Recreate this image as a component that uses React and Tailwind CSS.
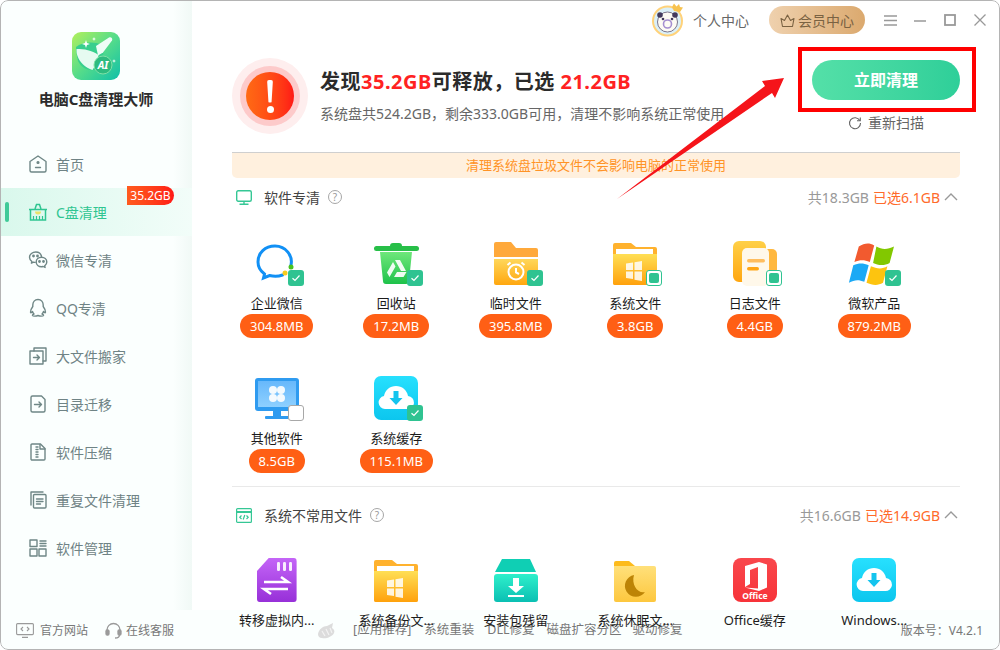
import { useId } from "react";

const FONT = "font-['Noto_Sans','Noto_Sans_CJK_SC',sans-serif]";

// ---------- 小图标 ----------
const NavSvg = ({ children }) => (
  <svg width="20" height="20" viewBox="0 0 20 20" fill="none" stroke="#6f8786" strokeWidth="1.4" strokeLinejoin="round" strokeLinecap="round">
    {children}
  </svg>
);

const HomeIcon = () => (
  <NavSvg>
    <path d="M2 7.500 10 2l8 5.500V16.500a1.500 1.500 0 0 1-1.500 1.500h-13A1.500 1.500 0 0 1 2 16.500Z" />
    <circle cx="10" cy="8.500" r=".9" fill="#6f8786" />
    <path d="M7.500 13.500h5" />
  </NavSvg>
);

const BasketIcon = () => (
  <svg width="20" height="20" viewBox="0 0 20 20" fill="none" stroke="#2fc591" strokeWidth="1.5">
    <path d="M1 7.500h18" />
    <path d="M2.500 7.500V18h15V7.500" />
    <path d="M7 7 8.500 2.500h3L13 7" />
    <path d="M7 7.500a3 3 0 0 0 6 0Z" fill="#e8e36a" stroke="none" transform="translate(0 2)" />
    <path d="M5.500 18v-4M8.500 18v-4M11.500 18v-4M14.500 18v-4" strokeWidth="1.200" />
  </svg>
);

const WechatIcon = () => (
  <NavSvg>
    <path d="M13.500 6.500C13 3.800 10.800 2 7.800 2 4.500 2 1.500 4.300 1.500 7.300c0 1.800 1 3.200 2.400 4.200l-.5 1.700 2.200-1c.5.100 1 .2 1.500.2" />
    <path d="M18.800 12c0-2.700-2.400-4.700-5.300-4.700S8.200 9.300 8.200 12s2.400 4.700 5.300 4.700c.6 0 1.100-.1 1.700-.2l1.900 1-.4-1.700c1.300-.9 2.100-2.200 2.100-3.800Z" />
    <circle cx="5.500" cy="6" r=".7" fill="#6f8786" />
    <circle cx="9.500" cy="6" r=".7" fill="#6f8786" />
    <circle cx="11.500" cy="11.500" r=".7" fill="#6f8786" />
    <circle cx="15.500" cy="11.500" r=".7" fill="#6f8786" />
  </NavSvg>
);

const QQIcon = () => (
  <NavSvg>
    <path d="M10 1.500c-3.300 0-5.200 2.500-5.200 5.500v1.500c-1.500 2-2.500 4-2.300 5.700.2 1 1 .6 2-.7.3 1 .8 1.800 1.500 2.500-1.200.4-1.700 1-1.500 1.500.4.800 3.500.8 5.500 0 2 .8 5.100.8 5.500 0 .2-.5-.3-1.100-1.500-1.500.7-.7 1.200-1.500 1.500-2.500 1 1.300 1.800 1.700 2 .7.200-1.700-.8-3.700-2.300-5.700V7c0-3-1.900-5.500-5.200-5.500Z" />
  </NavSvg>
);

const MoveIcon = () => (
  <NavSvg>
    <path d="M6 5V2h12v13h-3" />
    <rect x="2" y="5" width="13" height="13" />
    <path d="M5.500 11.500h6M9 9l2.500 2.500L9 14" />
  </NavSvg>
);

const DirIcon = () => (
  <NavSvg>
    <path d="M3 3.500A1.500 1.500 0 0 1 4.500 2h9L17 5.500v11a1.500 1.500 0 0 1-1.500 1.500h-11A1.500 1.500 0 0 1 3 16.500Z" />
    <path d="M6.500 10.500h7M11 8l2.500 2.500L11 13" />
  </NavSvg>
);

const ZipIcon = () => (
  <NavSvg>
    <path d="M3 3a1 1 0 0 1 1-1h8.500L17 6.500V17a1 1 0 0 1-1 1H4a1 1 0 0 1-1-1Z" />
    <path d="M12 2.500V7h5M8 5h2M8 7.500h2M8 10h2M8 12.500h2M8 15h2" />
  </NavSvg>
);

const DupIcon = () => (
  <NavSvg>
    <path d="M3 15V2h12" />
    <rect x="5.500" y="4.500" width="12.500" height="13.500" rx="1" />
    <path d="M8.500 9h6.500M8.500 11.500h6.500M8.500 14h4" />
  </NavSvg>
);

const ManageIcon = () => (
  <NavSvg>
    <rect x="2" y="2" width="7" height="6.500" />
    <rect x="2" y="11" width="7" height="7" />
    <rect x="11" y="11" width="7" height="7" />
    <path d="M12 3h6M12 5.500h6M12 8h6" />
  </NavSvg>
);

const navItems = [
  { label: "首页", icon: HomeIcon },
  { label: "C盘清理", icon: BasketIcon, active: true, badge: "35.2GB" },
  { label: "微信专清", icon: WechatIcon },
  { label: "QQ专清", icon: QQIcon },
  { label: "大文件搬家", icon: MoveIcon },
  { label: "目录迁移", icon: DirIcon },
  { label: "软件压缩", icon: ZipIcon },
  { label: "重复文件清理", icon: DupIcon },
  { label: "软件管理", icon: ManageIcon },
];

const Logo = () => (
  <svg width="48" height="48" viewBox="0 0 48 48">
    <defs>
      <linearGradient id="logoBg" x1="0" y1="0" x2="1" y2="1">
        <stop offset="0" stopColor="#b3f05c" />
        <stop offset=".5" stopColor="#55dc8a" />
        <stop offset="1" stopColor="#0fbfa9" />
      </linearGradient>
    </defs>
    <rect width="48" height="48" rx="9" fill="url(#logoBg)" />
    <path d="M4 15C10 10 22 9 30 13c3 8 1 18-4 24-8 3-16 0-20-8-1-5-2-9-2-14Z" fill="#38cf8e" />
    <path d="M4.500 17c8 0 15 1 22 6-1 6-3 10-6 15-7-2-13-8-15-14-1-2-1-5-1-7Z" fill="#e6fbf1" />
    <path d="M24 14 37 5.500c2-1 4 1 3 3l-9 12-5 3Z" fill="#eefdf7" />
    <circle cx="31" cy="33" r="9" fill="#2dbb7f" stroke="#7fe0a6" strokeWidth="1" />
    <text x="31" y="37" textAnchor="middle" fontSize="10.500" fontWeight="700" fontStyle="italic" fill="#fff" fontFamily="Noto Sans">AI</text>
    <path d="M14 8l1 3 3 1-3 1-1 3-1-3-3-1 3-1ZM22 5l.6 1.400 1.400.6-1.400.6L22 9l-.6-1.400L20 7l1.400-.6ZM42 27l.5 1.500 1.500.5-1.500.5L42 31l-.5-1.500L40 29l1.500-.5Z" fill="#fff" />
  </svg>
);

// ---------- 文件类型图标 ----------
const Check = ({ state }) => {
  if (state === "none") {
    return <span className="absolute right-[-5px] bottom-[-1px] h-4 w-4 rounded-[3px] border border-[#a8a8a8] bg-white" />;
  }
  if (state === "part") {
    return (
      <span className="absolute right-[-5px] bottom-[-1px] flex h-4 w-4 items-center justify-center rounded-[3px] border border-[#2fc391] bg-white">
        <span className="h-[10px] w-[10px] rounded-[2px] bg-[#2fc391]" />
      </span>
    );
  }
  return (
    <span className="absolute right-[-5px] bottom-[-1px] flex h-4 w-4 items-center justify-center rounded-[3px] bg-[#2fc391]">
      <svg width="10" height="10" viewBox="0 0 10 10" fill="none" stroke="#fff" strokeWidth="1.200">
        <path d="M1.500 5.200 4 7.500 8.500 2.500" />
      </svg>
    </span>
  );
};

const Grad = ({ id, from, to }) => (
  <linearGradient id={id} x1="0" y1="0" x2="0" y2="1">
    <stop offset="0" stopColor={from} />
    <stop offset="1" stopColor={to} />
  </linearGradient>
);

const FileIcon = ({ children }) => (
  <svg width="44" height="44" viewBox="0 0 44 44" className="overflow-visible">
    {children}
  </svg>
);

const WeComIcon = () => (
  <FileIcon>
    <path d="M36 24c2-9-5-19-16-19C10 5 3 12 3 21c0 5 2.500 9 6.500 12l-1 4 6-2.500c4 1 9 1 13-.5" fill="none" stroke="#1190f5" strokeWidth="3" strokeLinecap="round" />
    <circle cx="36" cy="26" r="2.500" fill="#48c31f" />
    <circle cx="30" cy="32" r="2.500" fill="#f8cc1c" />
  </FileIcon>
);

const TrashIcon = () => {
  const id = useId();
  return (
    <FileIcon>
      <defs>
        <Grad id={id} from="#6fe77a" to="#1ec24a" />
      </defs>
      <rect x="0" y="5" width="45" height="5" rx="2.500" fill="#27bf48" />
      <path d="M16 5a3 3 0 0 1 3-3h6a3 3 0 0 1 3 3Z" fill="#27bf48" />
      <path d="M6 11h32l-3 29a3 3 0 0 1-3 3H12a3 3 0 0 1-3-3Z" fill={`url(#${id})`} />
      <path d="M21 19h5l6 11h-5ZM19 21l2.500 4.500-6 10.500-2.500-4.500ZM23 31h9.500l-3 5H20Z" fill="#fff" opacity=".92" />
    </FileIcon>
  );
};

const TempIcon = () => {
  const id = useId();
  return (
    <FileIcon>
      <defs>
        <Grad id={id} from="#ffd75a" to="#ffa70f" />
      </defs>
      <path d="M0 3a2 2 0 0 1 2-2h15l5 6h20a2 2 0 0 1 2 2v7H0Z" fill="#ffa93b" />
      <path d="M0 18h44v24a2 2 0 0 1-2 2H2a2 2 0 0 1-2-2Z" fill={`url(#${id})`} />
      <circle cx="22" cy="31" r="7.500" fill="none" stroke="#fff" strokeWidth="2" />
      <path d="M22 27v4.500l3 1.500M13.500 24l3-2.500M30.500 24l-3-2.500" fill="none" stroke="#fff" strokeWidth="2" />
    </FileIcon>
  );
};

const WinPanes = ({ x, y, s = 1 }) => (
  <path transform={`translate(${x} ${y}) scale(${s})`} d="M0 2.500 7 1.500v7.500H0ZM8.500 1.300 16 0v9H8.500ZM0 10.500h7V18l-7-1ZM8.500 10.500H16V20l-7.500-1.300Z" fill="#fff" opacity=".85" />
);

const WinFolderIcon = () => {
  const id = useId();
  return (
    <FileIcon>
      <defs>
        <Grad id={id} from="#ffdf55" to="#ffa10c" />
      </defs>
      <path d="M0 4a2 2 0 0 1 2-2h16l5 4h19a2 2 0 0 1 2 2v34a2 2 0 0 1-2 2H2a2 2 0 0 1-2-2Z" fill="#ffb22e" />
      <rect x="3" y="8" width="37" height="8" fill="#fff" />
      <path d="M0 13h44v29a2 2 0 0 1-2 2H2a2 2 0 0 1-2-2Z" fill={`url(#${id})`} />
      <WinPanes x="13" y="20" />
    </FileIcon>
  );
};

const LogIcon = () => {
  const id = useId();
  return (
    <FileIcon>
      <defs>
        <Grad id={id} from="#ffd047" to="#ffa610" />
      </defs>
      <rect x="0" y="0" width="33" height="41" rx="6" fill={`url(#${id})`} />
      <rect x="20" y="8" width="24" height="36" rx="5" fill="#ffb840" />
      <rect x="9" y="7" width="27" height="38" rx="5" fill="#fff8ea" />
      <rect x="14" y="18" width="18" height="3.500" rx="1.700" fill="#ffbd5e" />
      <rect x="14" y="26" width="12" height="3.500" rx="1.700" fill="#ffa616" />
    </FileIcon>
  );
};

const WindowsIcon = () => (
  <FileIcon>
    <g transform="translate(-2 0) scale(1.100 1.100)">
      <path d="M8 5c5-3 9-4 14-1l-4 15c-5-2-9-2-14 0Z" fill="#f25a2f" />
      <path d="M24 5c5 3 10 3 16 0l-4 15c-5 3-11 2-15 0Z" fill="#82c800" />
      <path d="M3 22c5-2 9-2 14 0l-4 15c-5-2-9-2-14 1Z" fill="#1ba9f5" />
      <path d="M19 23c5 2 10 3 15 0l-4 15c-5 3-10 2-15 0Z" fill="#fdc40f" />
    </g>
  </FileIcon>
);

const MonitorIcon = () => {
  const id = useId();
  return (
    <FileIcon>
      <defs>
        <Grad id={id} from="#67b8fb" to="#8ed0ff" />
      </defs>
      <rect x="0" y="2" width="44" height="33" rx="3" fill="#2f9bf0" />
      <rect x="3" y="5" width="38" height="26" fill={`url(#${id})`} />
      <rect x="18" y="35" width="8" height="6" fill="#2f9bf0" />
      <rect x="10" y="40" width="24" height="3" rx="1" fill="#2f9bf0" />
      <g fill="#fff" opacity=".92">
        <circle cx="18" cy="14" r="4" />
        <circle cx="26" cy="14" r="4" />
        <circle cx="18" cy="22" r="4" />
        <circle cx="26" cy="22" r="4" />
      </g>
    </FileIcon>
  );
};

const CloudIcon = () => {
  const id = useId();
  return (
    <FileIcon>
      <defs>
        <Grad id={id} from="#27e0fe" to="#0cc6ee" />
      </defs>
      <rect width="44" height="44" rx="7" fill={`url(#${id})`} />
      <path d="M11 33a6.500 6.500 0 0 1-1-12.900C11 14 16 10 22 10c6 0 11 4 12 10a6.500 6.500 0 0 1-1 13Z" fill="#fff" />
      <path d="M19.500 15h5v7h4L22 29l-6.500-7h4Z" fill="#14c4ee" />
    </FileIcon>
  );
};

const VirtualIcon = () => {
  const id = useId();
  return (
    <FileIcon>
      <defs>
        <Grad id={id} from="#c465f7" to="#9730d8" />
      </defs>
      <path d="M13 0h28a3 3 0 0 1 3 3v38a3 3 0 0 1-3 3H3a3 3 0 0 1-3-3V13Z" transform="translate(2 0) scale(.9 1)" fill={`url(#${id})`} />
      <g fill="#fff" opacity=".9">
        <rect x="22" y="4" width="3" height="9" rx="1.200" />
        <rect x="28" y="4" width="3" height="9" rx="1.200" />
        <rect x="34" y="4" width="3" height="9" rx="1.200" />
      </g>
      <path d="M9 24h24l-7-5M33 31H9l7 5" fill="none" stroke="#fff" strokeWidth="2.600" />
    </FileIcon>
  );
};

const InstallIcon = () => {
  const id = useId();
  return (
    <FileIcon>
      <defs>
        <Grad id={id} from="#2ff0cb" to="#0abfb3" />
      </defs>
      <path d="M8 1h28l6 13H1Z" fill="#0fcfb4" />
      <rect x="0" y="16" width="44" height="28" rx="3" fill={`url(#${id})`} />
      <path d="M19 20h6v8h5l-8 7-8-7h5Z" fill="#fff" />
      <rect x="14" y="37" width="16" height="2" fill="#fff" />
    </FileIcon>
  );
};

const SleepIcon = () => {
  const id = useId();
  return (
    <FileIcon>
      <defs>
        <Grad id={id} from="#ffe07a" to="#fdc73e" />
      </defs>
      <path d="M1 5a2 2 0 0 1 2-2h13l6 5h-21Z" fill="#fdbb1c" />
      <path d="M1 8h40a2 2 0 0 1 2 2v32a2 2 0 0 1-2 2H3a2 2 0 0 1-2-2Z" fill={`url(#${id})`} />
      <path d="M21 17a11 11 0 1 0 11 17c-7 2-14-7-11-17Z" fill="#bd8406" />
    </FileIcon>
  );
};

const OfficeIcon = () => {
  const id = useId();
  return (
    <FileIcon>
      <defs>
        <Grad id={id} from="#f9474c" to="#f73339" />
      </defs>
      <rect width="44" height="44" rx="8" fill={`url(#${id})`} />
      <path d="M12 8 26 4l8 2.500v23L26 33l-14-3.500 13 1V9L17 12v14l-5 3Z" fill="#fff" />
      <text x="22" y="41" textAnchor="middle" fontSize="8.500" fontWeight="700" fill="#fff" fontFamily="Noto Sans">Office</text>
    </FileIcon>
  );
};

const softwareFiles = [
  { name: "企业微信", size: "304.8MB", icon: WeComIcon, state: "on" },
  { name: "回收站", size: "17.2MB", icon: TrashIcon, state: "on" },
  { name: "临时文件", size: "395.8MB", icon: TempIcon, state: "on" },
  { name: "系统文件", size: "3.8GB", icon: WinFolderIcon, state: "part" },
  { name: "日志文件", size: "4.4GB", icon: LogIcon, state: "part" },
  { name: "微软产品", size: "879.2MB", icon: WindowsIcon, state: "on" },
  { name: "其他软件", size: "8.5GB", icon: MonitorIcon, state: "none" },
  { name: "系统缓存", size: "115.1MB", icon: CloudIcon, state: "on" },
];

const rareFiles = [
  { name: "转移虚拟内...", icon: VirtualIcon },
  { name: "系统备份文...", icon: WinFolderIcon },
  { name: "安装包残留", icon: InstallIcon },
  { name: "系统休眠文...", icon: SleepIcon },
  { name: "Office缓存", icon: OfficeIcon },
  { name: "Windows...", icon: CloudIcon },
];

const FileItem = ({ file }) => {
  const Icon = file.icon;
  return (
    <div className="flex flex-col items-center">
      <div className="relative h-11 w-11">
        <Icon />
        {file.state && <Check state={file.state} />}
      </div>
      <div className="mt-[8px] h-5 text-[13px] leading-5 whitespace-nowrap text-[#1c1c1c]">{file.name}</div>
      {file.size && (
        <div className="mt-[1px] flex h-6 items-center rounded-full bg-[#ff5f15] px-[10px] text-[13px] leading-6 text-white">
          {file.size}
        </div>
      )}
    </div>
  );
};

const HelpIcon = () => (
  <span className="ml-2 flex h-[14px] w-[14px] items-center justify-center rounded-full border border-[#a6a6a6] text-[10px] leading-none text-[#999]">?</span>
);

const Chevron = () => (
  <svg width="14" height="8" viewBox="0 0 14 8" fill="none" stroke="#999" strokeWidth="1.400" className="ml-[4px]">
    <path d="M1 7 7 1l6 6" />
  </svg>
);

const SectionHeader = ({ icon, title, total, picked, className }) => (
  <div className={`flex items-center pr-[2px] text-[14px] ${className}`}>
    <span className="ml-1 flex h-4 w-4 items-center justify-center">{icon}</span>
    <span className="ml-3 text-[#444]">{title}</span>
    <HelpIcon />
    <span className="ml-auto text-[#999]">{total}</span>
    <span className="ml-[4px] text-[#ff6a2b]">{picked}</span>
    <Chevron />
  </div>
);

const Sidebar = () => (
  <aside className="flex h-[610px] w-[192px] shrink-0 flex-col bg-gradient-to-r from-[#fbfffe] from-90% to-[#f1f9f6]">
    <div className="mt-[32px] flex justify-center">
      <Logo />
    </div>
    <div className="mt-[9px] text-center text-[15px] leading-5 font-bold text-[#2c2c2c]">电脑C盘清理大师</div>
    <nav className="mt-[31px] flex flex-col">
      {navItems.map((item) => {
        const Icon = item.icon;
        return (
          <div
            key={item.label}
            className={`relative flex h-12 items-center pl-[28px] text-[14px] ${
              item.active ? "bg-gradient-to-r from-[#d9f8ec] to-[#f2fdf9] text-[#2fc591]" : "text-[#6f8385]"
            }`}
          >
            {item.active && <span className="absolute top-[14px] left-[5px] h-[20px] w-[4px] rounded-full bg-[#3fca98]" />}
            <Icon />
            <span className="ml-[8px]">{item.label}</span>
            {item.badge && (
              <span className="absolute top-[-2px] left-[127px] flex h-[19px] w-[47px] items-center justify-center rounded-tl-lg rounded-r-full bg-gradient-to-r from-[#ff5a1e] to-[#ff1717] text-[12px] leading-none text-white">
                {item.badge}
              </span>
            )}
          </div>
        );
      })}
    </nav>
  </aside>
);

const TopBar = () => (
  <div className="flex h-10 items-center justify-end pr-[14px] text-[14px] text-[#666]">
    <svg width="34" height="34" viewBox="0 0 34 34" className="shrink-0">
      <circle cx="16.500" cy="18" r="15.500" fill="#ffd27a" />
      <circle cx="16.500" cy="18" r="13.500" fill="#dbf0f7" />
      <circle cx="16.500" cy="19" r="10" fill="#fdfbf4" stroke="#5f5470" strokeWidth=".8" />
      <circle cx="9" cy="12" r="2.800" fill="#433a5c" />
      <circle cx="24" cy="12" r="2.800" fill="#433a5c" />
      <circle cx="16.500" cy="21" r="4" fill="none" stroke="#a58fd0" strokeWidth="1.600" />
      <circle cx="12" cy="16" r="1.300" fill="#433a5c" />
      <circle cx="21" cy="16" r="1.300" fill="#433a5c" />
      <path d="M21 4 23 .5l2.500 3L28 1l1 3 3 .5-3 4.500-6-1Z" fill="#f7c24f" />
    </svg>
    <span className="ml-[8px]">个人中心</span>
    <div className="ml-[20px] flex h-7 w-24 items-center justify-center rounded-full bg-gradient-to-r from-[#efd1ae] to-[#dba96e] text-[#7a6242]">
      <svg width="15" height="15" viewBox="0 0 15 15" fill="none" stroke="#7a6242" strokeWidth="1.100" strokeLinejoin="round">
        <path d="M1 5.500 4.500 7.500 7.500 2l3 5.500 3.500-2-1.500 8h-10Z" />
      </svg>
      <span className="ml-[3px]">会员中心</span>
    </div>
    <div className="ml-[19px] flex items-center">
      <svg width="13" height="13" viewBox="0 0 13 13" stroke="#999" strokeWidth="1.500"><path d="M0 2h13M0 6.500h13M0 11h13" /></svg>
      <svg width="12" height="13" viewBox="0 0 12 13" stroke="#999" strokeWidth="1.500" className="ml-[17px]"><path d="M0 7h12" /></svg>
      <svg width="12" height="12" viewBox="0 0 12 12" fill="none" stroke="#999" strokeWidth="1.800" className="ml-[18px]"><rect x="1" y="1" width="10" height="10" /></svg>
      <svg width="12" height="12" viewBox="0 0 12 12" stroke="#999" strokeWidth="1.300" className="ml-[18px]"><path d="m.5.500 11 11M11.500.500l-11 11" /></svg>
    </div>
  </div>
);

const Hero = () => (
  <div className="flex h-[112px] pr-[40px] pl-[40px]">
    <div className="mt-[18px] flex h-[76px] w-[76px] shrink-0 items-center justify-center rounded-full bg-[#feeeee]">
      <div className="flex h-[60px] w-[60px] items-center justify-center rounded-full bg-[#fdcaca]">
        <div className="flex h-12 w-12 flex-col items-center justify-center rounded-full bg-gradient-to-r from-[#ff6a14] to-[#ff1616]">
          <span className="h-[23px] w-[6px] rounded-b-[3px] rounded-t-[2px] [clip-path:polygon(0_0,100%_0,75%_100%,25%_100%)] bg-white" />
          <span className="mt-[3px] h-[7px] w-[7px] rounded-full bg-white" />
        </div>
      </div>
    </div>
    <div className="ml-[12px] min-w-0">
      <div className="mt-[30px] text-[20px] leading-6 font-bold tracking-[0.5px] whitespace-nowrap text-[#2b2b2b]">
        发现<span className="text-[#ff2222]">35.2GB</span>可释放，已选 <span className="text-[#ff2222]">21.2GB</span>
      </div>
      <div className="mt-[10px] text-[14px] leading-5 whitespace-nowrap text-[#666]">
        系统盘共524.2GB，剩余333.0GB可用，清理不影响系统正常使用
      </div>
    </div>
    <div className="ml-auto flex w-[148px] shrink-0 flex-col items-center">
      <div className="mt-[20px] flex h-10 w-[148px] items-center justify-center rounded-full bg-gradient-to-r from-[#54e0a8] to-[#2ecf99] text-[16px] font-bold text-white">
        立即清理
      </div>
      <div className="mt-[13px] flex items-center text-[14px] leading-5 text-[#666]">
        <svg width="14" height="14" viewBox="0 0 14 14" fill="none" stroke="#666" strokeWidth="1.100">
          <path d="M11.800 4.500A5.500 5.500 0 1 0 12.500 7" />
          <path d="M12.300 1.500v3.300H9" />
        </svg>
        <span className="ml-[6px]">重新扫描</span>
      </div>
    </div>
  </div>
);

const MainContent = () => (
  <main className="relative z-10 flex h-[650px] min-w-0 flex-1 flex-col overflow-hidden">
    <TopBar />
    <Hero />
    <div className="mr-[40px] ml-[40px] flex h-[26px] items-center justify-center rounded-b-[5px] border-t border-[#cfcfcf] bg-[#fff0de] text-[13px] text-[#ff9326]">
      清理系统盘垃圾文件不会影响电脑的正常使用
    </div>
    <div className="mr-[40px] ml-[40px] flex-1">
      <SectionHeader
        className="h-10 pb-[2px]"
        title="软件专清"
        total="共18.3GB"
        picked="已选6.1GB"
        icon={
          <svg width="16" height="15" viewBox="0 0 16 15" fill="none" stroke="#35c795" strokeWidth="1.400">
            <rect x=".7" y=".7" width="14.600" height="10.600" rx="1.500" />
            <path d="M8 11.500v3M3.500 14.300h9" />
          </svg>
        }
      />
      <div className="ml-[-15px] grid w-[717px] grid-cols-6 gap-y-[38px] pt-[23px]">
        {softwareFiles.map((file) => (
          <FileItem key={file.name} file={file} />
        ))}
      </div>
      <div className="mt-[13px] border-t border-[#e9e9e9]">
        <SectionHeader
          className="h-14"
          title="系统不常用文件"
          total="共16.6GB"
          picked="已选14.9GB"
          icon={
            <svg width="16" height="15" viewBox="0 0 16 15" fill="none" stroke="#35c795" strokeWidth="1.200">
              <rect x=".6" y=".6" width="14.800" height="13.800" rx="1" />
              <path d="M.6 4h14.800" strokeWidth="2" />
              <path d="M5.500 7.500 3.800 9.300l1.700 1.700M10.500 7.500l1.700 1.800-1.700 1.700M8.800 7 7.200 11.500" />
            </svg>
          }
        />
        <div className="ml-[-15px] grid w-[717px] grid-cols-6 pt-[15px]">
          {rareFiles.map((file) => (
            <FileItem key={file.name} file={file} />
          ))}
        </div>
      </div>
    </div>
  </main>
);

const Footer = () => (
  <footer className="absolute right-0 bottom-0 left-0 z-0 flex h-10 items-center bg-[#fbfffe] pt-[1px] pr-[17px] pl-[16px] text-[12px] text-[#777]">
    <svg width="18" height="15" viewBox="0 0 18 15" fill="none" stroke="#9a9a9a" strokeWidth="1.100">
      <rect x=".6" y=".6" width="16.800" height="11" rx="1" />
      <path d="M6 14.400h6M7 4l-2 2 2 2M11 4l2 2-2 2" />
    </svg>
    <span className="ml-[6px]">官方网站</span>
    <svg width="17" height="17" viewBox="0 0 17 17" fill="none" stroke="#9a9a9a" strokeWidth="1.300" className="ml-[17px]">
      <path d="M2 10V8a6.500 6.500 0 0 1 13 0v2" />
      <rect x="1" y="8" width="3" height="5" rx="1.200" fill="#9a9a9a" />
      <rect x="13" y="8" width="3" height="5" rx="1.200" fill="#9a9a9a" />
      <path d="M14.500 13c0 2-2 3-4.500 3" />
    </svg>
    <span className="ml-[4px]">在线客服</span>
    <svg width="20" height="18" viewBox="0 0 20 18" className="ml-[143px]">
      <path d="M1 12c1-5 5-8 9-8l6-3-1 5c2 1 3 3 2 5-2 4-8 6-12 5-3 0-4-2-4-4Z" fill="#dcdcdc" />
      <path d="M5 9l3 5M9 7l3 6M13 6l2 5" stroke="#f2f2f2" strokeWidth="1.200" />
    </svg>
    <span className="ml-[16px] text-[12.5px]">[应用推荐]</span>
    <span className="ml-[13px] text-[12.5px]">系统重装</span>
    <span className="ml-[13px] text-[12.5px]">DLL修复</span>
    <span className="ml-[12px] text-[12.5px]">磁盘扩容分区</span>
    <span className="ml-[11px] text-[12.5px]">驱动修复</span>
    <span className="ml-auto">版本号：V4.2.1</span>
  </footer>
);

export default function App() {
  return (
    <div className={`relative flex h-[650px] w-[1000px] overflow-hidden rounded-lg bg-white ${FONT}`}>
      <Sidebar />
      <MainContent />
      <Footer />
      {/* 窗口描边 */}
      <div className="pointer-events-none absolute inset-0 z-20 rounded-lg border border-[#b4b4b4]" />
      {/* 截图上的红色标注 */}
      <div className="pointer-events-none absolute top-[47px] left-[798px] z-20 h-[65px] w-[178px] border-4 border-[#ff0000]" />
      <svg width="180" height="160" viewBox="0 0 180 160" className="pointer-events-none absolute top-[70px] left-[610px] z-20">
        <path d="M7 129 155 16l-3-5 22-3-9 20-3-5Z" fill="#f5141a" />
      </svg>
    </div>
  );
}
